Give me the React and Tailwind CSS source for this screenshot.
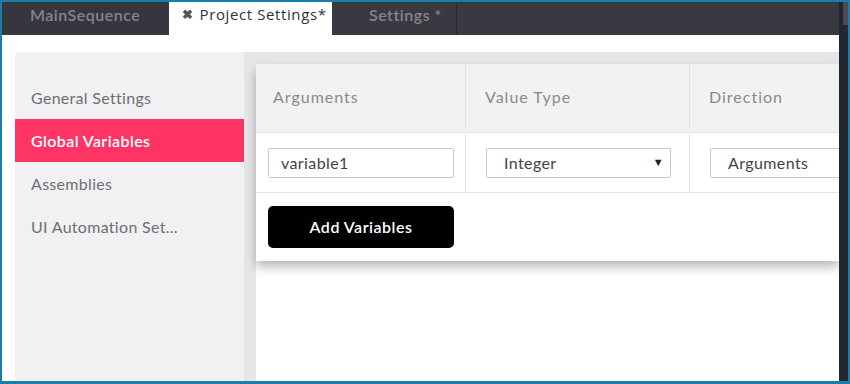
export default function App() {
  const navItems = ["General Settings", "Global Variables", "Assemblies", "UI Automation Set..."];
  const active = "Global Variables";

  return (
    <div
      className="w-[850px] h-[384px] overflow-hidden bg-[#177fa8] pt-[2px] pl-[2px] pr-[2px] pb-[3px]"
      style={{ fontFamily: "Lato, 'Noto Sans', sans-serif" }}
    >
      <div className="flex h-full w-full">
        <div className="flex flex-1 flex-col min-w-0">
          {/* tab bar */}
          <div className="flex h-[33px] shrink-0 bg-[#393942]">
            <div className="flex w-[167px] items-center pl-[28px] pb-[8px] text-[16px] font-semibold tracking-[0.5px] text-[#85858c] bg-[#37363f]">
              MainSequence
            </div>
            <div
              className="flex w-[163px] items-center bg-white pl-[13px] pb-[8px] text-[15px] tracking-[0.6px] text-[#333]"
              style={{ fontFamily: "'Open Sans', sans-serif" }}
            >
              <span className="mr-[6px] text-[13px] font-bold text-[#555]">✖</span>
              Project Settings*
            </div>
            <div className="flex w-[125px] items-center border-r border-[#2a2a31] pl-[37px] pb-[8px] text-[16px] font-semibold tracking-[0.5px] text-[#85858c]">
              Settings *
            </div>
          </div>

          {/* content */}
          <div className="flex flex-1 bg-white pl-[13px] pt-[17px] min-h-0">
            <div className="flex flex-1 overflow-hidden rounded-tl-[4px]">
              {/* sidebar */}
              <div className="w-[229px] shrink-0 bg-[#f1f1f3] pt-[24px]">
                {navItems.map((item) => (
                  <div
                    key={item}
                    className={
                      item === active
                        ? "flex h-[43px] items-center bg-[#fe3465] pl-[16px] text-[16px] font-semibold tracking-[0.4px] text-white"
                        : "flex h-[43px] items-center pl-[16px] text-[16px] tracking-[0.3px] text-[#6e6e72]"
                    }
                  >
                    {item}
                  </div>
                ))}
              </div>

              {/* table area */}
              <div className="flex-1 min-w-0 border-l-[12px] border-t-[12px] border-[#e6e6e8] bg-white">
                <div className="bg-white shadow-[0_6px_10px_rgba(0,0,0,0.28)]">
                  <div className="flex h-[69px] border-b border-[#e1e4e6] bg-[#f1f2f2] pb-[3px] text-[16px] tracking-[1px] text-[#8a8a8e]">
                    <div className="flex w-[210px] shrink-0 items-center border-r border-[#e1e4e6] pl-[17px]">Arguments</div>
                    <div className="flex w-[224px] shrink-0 items-center border-r border-[#e1e4e6] pl-[19px]">Value Type</div>
                    <div className="flex flex-1 items-center pl-[19px]">Direction</div>
                  </div>
                  <div className="flex h-[60px] border-b border-[#e1e4e6] text-[16px] tracking-[0.4px] text-[#444]">
                    <div className="flex w-[210px] shrink-0 items-center border-r border-[#e1e4e6] pl-[12px]">
                      <div className="flex h-[30px] w-[186px] items-center rounded-[2px] border border-[#c9c9c9] pl-[12px]">variable1</div>
                    </div>
                    <div className="flex w-[224px] shrink-0 items-center border-r border-[#e1e4e6] pl-[20px]">
                      <div className="flex h-[30px] w-[185px] items-center justify-between rounded-[2px] border border-[#c9c9c9] pl-[17px] pr-[6px]">
                        <span>Integer</span>
                        <span className="text-[11px] text-[#222]">▼</span>
                      </div>
                    </div>
                    <div className="flex flex-1 items-center pl-[20px] overflow-hidden">
                      <div className="flex h-[30px] w-[185px] shrink-0 items-center rounded-[2px] border border-[#c9c9c9] pl-[17px]">Arguments</div>
                    </div>
                  </div>
                  <div className="flex h-[68px] items-center pl-[12px]">
                    <button className="h-[42px] w-[186px] rounded-[5px] bg-black text-[16px] font-semibold tracking-[0.5px] text-white">
                      Add Variables
                    </button>
                  </div>
                </div>
              </div>
            </div>
          </div>
        </div>

        {/* scrollbar */}
        <div className="flex w-[9px] shrink-0 bg-[#1f1f29]">
          <div className="w-[4px] bg-[#25252f]" />
          <div className="flex-1 flex flex-col">
            <div className="h-[23px] bg-[#4a4a55]" />
            <div className="flex-1 bg-[#262632]" />
          </div>
        </div>
      </div>
    </div>
  );
}
